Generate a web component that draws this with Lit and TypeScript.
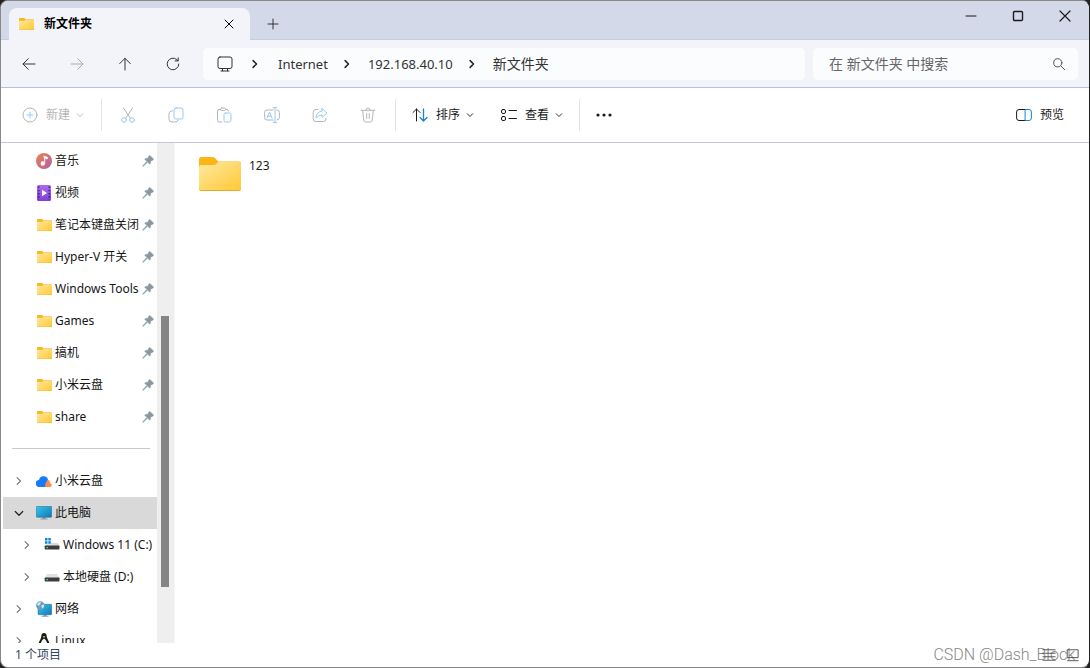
import { LitElement, html, svg, css, nothing } from "lit";
import { customElement, property, state } from "lit/decorators.js";
import { classMap } from "lit/directives/class-map.js";

const folder = (w: number, h: number) => html`
  <svg width=${w} height=${h} viewBox="0 0 42 34" preserveAspectRatio="none" aria-hidden="true">
    <defs>
      <linearGradient id="fold" x1="0" y1="0" x2="1" y2="1">
        <stop offset="0" stop-color="#ffe8a0" /><stop offset="1" stop-color="#ffc935" />
      </linearGradient>
    </defs>
    <path d="M0 2.5Q0 0 2.5 0H13q2 0 3.300 1.300L19 4.500H39.500Q42 4.500 42 7V20H0z" fill="#fbb616" />
    <path d="M0 10Q0 8 2 8H14q2 0 3.500-1.300L19 5H40q2 0 2 2V31.500Q42 34 39.500 34H2.500Q0 34 0 31.500z" fill="#e3ab2c" />
    <path d="M0 10Q0 8 2 8H14q2 0 3.500-1.300L19 5H40q2 0 2 2V30.500Q42 33 39.500 33H2.500Q0 33 0 30.500z" fill="url(#fold)" />
  </svg>`;

const stroke = (size: number, body: unknown) => html`
  <svg width=${size} height=${size} viewBox="0 0 16 16" fill="none" stroke="currentColor"
    stroke-linecap="round" stroke-linejoin="round" aria-hidden="true">${body}</svg>`;

const icons: Record<string, () => unknown> = {
  back: () => stroke(16, svg`<path d="M14 8H2M7.300 2.700L2 8l5.300 5.300" />`),
  forward: () => stroke(16, svg`<path d="M2 8h12M8.700 2.700L14 8l-5.300 5.300" />`),
  up: () => stroke(16, svg`<path d="M8 14V2.300M2.700 7.600L8 2.300l5.300 5.300" />`),
  refresh: () => stroke(16, svg`<path d="M13.800 8a5.800 5.800 0 1 1-2-4.400l1.200 1.100M13.200 1.800v3.100h-3.100" />`),
  device: () => stroke(16, svg`<rect x="1" y="1" width="14" height="11.500" rx="2" /><path d="M5.500 12.500v2.300M10.500 12.500v2.300M4 15h8" />`),
  search: () => stroke(16, svg`<circle cx="6.800" cy="6.800" r="4.100" /><path d="M10 10l3.700 3.700" />`),
  plus: () => stroke(16, svg`<path d="M8 3v10M3 8h10" />`),
  close: () => stroke(16, svg`<path d="M4 4l8 8M12 4l-8 8" />`),
  min: () => stroke(16, svg`<path d="M3 8h10" />`),
  max: () => stroke(16, svg`<rect x="3.500" y="3.500" width="9" height="9" rx="1" stroke-width="1.400" />`),
  shut: () => stroke(16, svg`<path d="M3 3l10 10M13 3L3 13" stroke-width="1.200" />`),
  add: () => stroke(16, svg`<circle cx="8" cy="8" r="7" /><path d="M8 5v6M5 8h6" stroke="#94cbf3" />`),
  cut: () => stroke(16, svg`<path d="M3.500 1l6.800 10.200M12.500 1L5.700 11.200" /><g stroke="#94cbf3"><circle cx="4" cy="13" r="2.400" /><circle cx="12" cy="13" r="2.400" /></g>`),
  copy: () => stroke(16, svg`<path d="M4.500 4H3.500Q1 4.500 1 7v5q0 3 3 3h3.500q2 0 2.500-2" /><rect x="6" y="1" width="9" height="11" rx="2" stroke="#94cbf3" />`),
  paste: () => stroke(16, svg`<path d="M4.500 2.500H3Q1.500 2.500 1.500 4v9.500Q1.500 15 3 15h3M9.500 2.500H11q1.500 0 1.500 1.500" /><rect x="4.500" y="1" width="5" height="2.500" rx="1.200" /><rect x="8" y="6" width="7" height="9" rx="1.500" stroke="#94cbf3" />`),
  rename: () => stroke(16, svg`<path d="M9 3H3Q.6 3 .6 5.400v5.200Q.6 13 3 13h6M13 3q2.400 0 2.400 2.400v5.200Q15.400 13 13 13" /><g stroke="#94cbf3"><path d="M3 11l2.500-6L8 11M3.800 9.200h3.400M11 .700v14.600M9.300.600h3.400M9.300 15.400h3.400" /></g>`),
  share: () => stroke(16, svg`<path d="M6 2.500H4Q1.200 2.500 1.200 5.300v6.400Q1.200 14.500 4 14.500h7.500q2.500 0 2.500-2.500v-.500" /><path d="M10 1.500L15 6l-5 4.500V8Q6 8 4 11q.300-6.300 6-7z" stroke="#94cbf3" />`),
  trash: () => stroke(16, svg`<path d="M1.200 3.300h13.600M5.800 3Q6 1 8 1t2.200 2M2.700 3.500l1 9.500q.3 2 2 2h4.600q1.700 0 2-2l1-9.500M6.700 6.500v5M9.300 6.500v5" />`),
  sort: () => stroke(16, svg`<path d="M4.500 14V2M1 5.500L4.500 2 8 5.500" /><path d="M11.500 2v12M8 10.500l3.500 3.500 3.500-3.500" stroke="#1683d8" stroke-width="1.300" />`),
  view: () => stroke(16, svg`<rect x=".500" y="2.500" width="4" height="4" rx="1.500" /><rect x=".500" y="9.500" width="4" height="4" rx="1.500" /><path d="M8 3.500h7.500M8 11.500h7.500" />`),
  more: () => html`<svg width="16" height="16" viewBox="0 0 16 16" fill="currentColor" aria-hidden="true"><circle cx="2" cy="8" r="1.600" /><circle cx="8" cy="8" r="1.600" /><circle cx="14" cy="8" r="1.600" /></svg>`,
  preview: () => stroke(16, svg`<path d="M9.500 2.500H3Q.6 2.500.6 5v6Q.6 13.500 3 13.500h6.500" /><path d="M9.500 2.500H13q2.400 0 2.400 2.500v6q0 2.500-2.400 2.500H9.500z" stroke="#1683d8" />`),
  right: () => stroke(12, svg`<path d="M5.500 3.500L10 8l-4.500 4.500" stroke-width="1.500" />`),
  crumb: () => stroke(12, svg`<path d="M5.500 3.500L10 8l-4.500 4.500" stroke-width="2" />`),
  down: () => stroke(12, svg`<path d="M3 6l5 5 5-5" stroke-width="1.600" />`),
  caret: () => stroke(8, svg`<path d="M2.500 5.500L8 11l5.500-5.500" stroke-width="1.800" />`),
  pin: () => html`<svg width="12" height="12" viewBox="0 0 12 12" aria-hidden="true"><path d="M7.200.800Q7.700.300 8.200.800l3 3q.500.500 0 1L8.700 6.200l-.5 2.500q-.2.600-.7.200L5.600 7 1 11.400l-.4-.3L4.900 6.400 3 4.500q-.4-.5.200-.7l2.500-.5z" fill="#8b98a3" stroke="#8b98a3" stroke-width=".6" /></svg>`,
  folder: () => folder(15, 12),
  music: () => html`<svg width="16" height="16" viewBox="0 0 16 16" aria-hidden="true"><defs><linearGradient id="mus" x1="0" y1="0" x2="1" y2="1"><stop stop-color="#ee8150" /><stop offset="1" stop-color="#ac61a5" /></linearGradient></defs><circle cx="8" cy="8" r="8" fill="url(#mus)" /><path d="M7.500 3l3.800 1v2L8.800 5.300v5.200" fill="#fff" stroke="#fff" stroke-width=".6" /><circle cx="6.800" cy="10.500" r="2.200" fill="#fff" /></svg>`,
  video: () => html`<svg width="14" height="16" viewBox="0 0 14 16" aria-hidden="true"><defs><linearGradient id="vid" x1="0" y1="0" x2="0" y2="1"><stop stop-color="#ad6cf0" /><stop offset="1" stop-color="#7f3fd7" /></linearGradient></defs><rect width="14" height="16" rx="1.500" fill="url(#vid)" /><path d="M1.700 1.500v13M12.300 1.500v13" stroke="#45208a" stroke-width="1.600" stroke-dasharray="1.600 1.600" /><path d="M5 4.800L10 8l-5 3.200z" fill="#fff" /></svg>`,
  cloud: () => html`<svg width="16" height="12" viewBox="0 0 16 12" aria-hidden="true"><path d="M3.500 12A3.500 3.500 0 0 1 3 5 4.700 4.700 0 0 1 12 4.300L10 12z" fill="#147bff" /><path d="M9 12Q9 6 13 4.800 14 9 16 10q-.5 2-2.500 2z" fill="#ff8a4b" /></svg>`,
  pc: () => html`<svg width="16" height="14" viewBox="0 0 16 14" aria-hidden="true"><defs><linearGradient id="scr" x1="0" y1="0" x2="1" y2="1"><stop stop-color="#35c7e9" /><stop offset="1" stop-color="#1177ba" /></linearGradient></defs><path d="M6.500 11h3v2h-3zM4.500 12.600h7v1h-7z" fill="#8d9aa4" /><rect x=".3" y=".3" width="15.400" height="11" rx=".8" fill="url(#scr)" stroke="#24688d" stroke-width=".5" /></svg>`,
  winDrive: () => html`<svg width="16" height="14" viewBox="0 0 16 14" aria-hidden="true"><path d="M1 0h2.500v2.500H1zM4.300 0h2.500v2.500H4.300zM1 3.300h2.500v2.500H1zM4.300 3.300h2.500v2.500H4.300z" fill="#0b83d9" /><path d="M7 5h7l1.500 3H1L2 6.300h5z" fill="#d8dadc" /><rect x=".7" y="7.500" width="14.800" height="4" rx=".7" fill="#3a3d40" /><rect x="2.300" y="9" width="1.700" height="1.200" fill="#41e04d" /></svg>`,
  drive: () => html`<svg width="16" height="14" viewBox="0 0 16 14" aria-hidden="true"><path d="M3 4h10l2.500 4H.7z" fill="#dfe1e3" /><rect x=".7" y="7.500" width="14.800" height="4" rx=".7" fill="#3a3d40" /><rect x="2.300" y="9" width="1.700" height="1.200" fill="#41e04d" /></svg>`,
  network: () => html`<svg width="16" height="16" viewBox="0 0 16 16" aria-hidden="true"><defs><linearGradient id="net" x1="0" y1="0" x2="1" y2="1"><stop stop-color="#3ac8ea" /><stop offset="1" stop-color="#1177ba" /></linearGradient></defs><path d="M7.500 13.500h3v1.700h-3zM5.500 14.800h7v1h-7z" fill="#8d9aa4" /><rect x="2" y="3.300" width="13.700" height="10.400" rx=".8" fill="url(#net)" stroke="#24688d" stroke-width=".5" /><circle cx="4.300" cy="4.500" r="4.200" fill="#6d9fbd" /><path d="M1 3q2-2.500 4-2l-1 2.500L2.500 5zM5 4.500l3-1q.5 2-1.500 4z" fill="#d4eaf4" /></svg>`,
  linux: () => html`<svg width="16" height="16" viewBox="0 0 16 16" aria-hidden="true"><path d="M8 0q2.700 0 2.700 3.500Q11 5 12.500 8q1.500 3 .5 5H3Q2 11 3.500 8 5 5.500 5.300 3.500 5.300 0 8 0z" fill="#17191b" /><path d="M8 5.500q2 .8 3 4V14H5V9.500q1-3.200 3-4z" fill="#f4f4f4" /><path d="M6.500 3.500L8 3l1.500.5L8 5z" fill="#f3b51c" /><path d="M2.500 11l3 3-.5 1.500-4-1zM13.500 11l-3 3 .5 1.500 4-1z" fill="#f3b51c" /></svg>`,
};

@customElement("nav-item")
class NavItem extends LitElement {
  @property() label = "";
  @property() icon = "folder";
  @property() arrow = "";
  @property({ type: Boolean }) pinned = false;
  @property({ type: Boolean }) selected = false;
  @property({ type: Boolean }) nested = false;

  static styles = css`
    :host { display: block; }
    .row {
      display: grid; grid-template-columns: 12px 16px minmax(0, 1fr) 12px;
      align-items: center; width: 100%; height: 32px;
      padding: 0 3px 0 10px; border: 0; background: none; color: #161616;
      font: inherit; text-align: left;
    }
    .selected { background: #d9d9d9; }
    .nested { padding-left: 18px; }
    .arrow { display: grid; place-items: center; color: #777; }
    .selected .arrow { color: #222; }
    .pic { display: grid; place-items: center; width: 16px; margin-left: 11px; }
    .text { margin-left: 14px; white-space: nowrap; }
    .pin { display: grid; }
    svg { display: block; }
  `;

  render() {
    return html`
      <button class=${classMap({ row: true, selected: this.selected, nested: this.nested })}>
        <span class="arrow">${this.arrow ? icons[this.arrow]() : nothing}</span>
        <span class="pic">${icons[this.icon]()}</span>
        <span class="text">${this.label}</span>
        <span class="pin">${this.pinned ? icons.pin() : nothing}</span>
      </button>`;
  }
}

interface Entry { label: string; icon?: string; arrow?: string; selected?: boolean; nested?: boolean; }

@customElement("app-root")
class AppRoot extends LitElement {
  @state() private quick: Entry[] = [
    { label: "音乐", icon: "music" },
    { label: "视频", icon: "video" },
    { label: "笔记本键盘关闭" },
    { label: "Hyper-V 开关" },
    { label: "Windows Tools" },
    { label: "Games" },
    { label: "搞机" },
    { label: "小米云盘" },
    { label: "share" },
  ];
  @state() private tree: Entry[] = [
    { label: "小米云盘", icon: "cloud", arrow: "right" },
    { label: "此电脑", icon: "pc", arrow: "down", selected: true },
    { label: "Windows 11 (C:)", icon: "winDrive", arrow: "right", nested: true },
    { label: "本地硬盘 (D:)", icon: "drive", arrow: "right", nested: true },
    { label: "网络", icon: "network", arrow: "right" },
    { label: "Linux", icon: "linux", arrow: "right" },
  ];

  static styles = css`
    :host { display: block; height: 100vh; background: #222; }
    * { box-sizing: border-box; }
    svg { display: block; flex: none; }
    button { display: flex; align-items: center; justify-content: center; padding: 0; border: 0; background: none; color: inherit; font: inherit; }
    .window {
      display: grid; grid-template-rows: 39px 48px 55px minmax(0, 1fr) 24px;
      height: 100%; overflow: hidden; color: #1b1b1b; background: #fff;
      border: 1px solid #88888b; border-top-color: #8c8885; border-right-color: #222; border-radius: 8px;
      font: 12px/16px "Noto Sans", "Noto Sans CJK SC", sans-serif;
    }
    .titlebar { display: flex; background: #d4d9ea; padding: 7px 0 0 8px; box-shadow: inset 0 -1px #c5cde0; }
    .tab {
      display: flex; align-items: center; width: 241px; padding: 0 13px 0 10px;
      background: #f2f4fa; border-radius: 8px 8px 0 0; font-weight: 700; color: #000;
    }
    .tab-title { flex: 1; margin-left: 10px; }
    .new-tab { width: 46px; color: #333; }
    .controls { display: flex; margin: -7px 1px 0 auto; }
    .controls button { width: 47px; height: 29px; }
    .address { display: flex; align-items: center; gap: 8px; padding: 0 11px 0 4px; background: #f2f4fa; border-bottom: 1px solid #b7bfdb; }
    .nav { display: flex; }
    .nav button { width: 48px; height: 32px; color: #333; }
    .nav button:disabled { color: #aaa; }
    .path, .search { display: flex; align-items: center; height: 32px; background: #fbfcfe; border-radius: 5px; font-size: 14px; }
    .path { flex: 1; padding-left: 14px; margin-left: -2px; color: #333; }
    .path ol { display: flex; align-items: center; margin: 0; padding: 0; list-style: none; }
    .path li { display: flex; align-items: center; }
    .sep { display: grid; place-items: center; width: 12px; margin: 0 15px 0 13px; color: #222; }
    .path li:first-child .sep { margin: 0 17px 0 16px; }
    .latin { font-size: 13px; }
    .path a { color: inherit; text-decoration: none; }
    .search { width: 265px; padding: 0 11px 0 16px; color: #555; }
    .search input { flex: 1; min-width: 0; padding: 0; border: 0; outline: 0; background: none; color: inherit; font: inherit; }
    .search input::placeholder { color: #666; opacity: 1; }
    .toolbar { display: flex; align-items: center; padding: 0 25px 0 21px; border-bottom: 1px solid #c3c6de; }
    .toolbar button { gap: 6px; }
    .toolbar button span { margin-left: 2px; }
    .toolbar button:disabled { color: #b5b5b5; }
    .tools { display: flex; gap: 32px; margin: 0 19px 0 18px; }
    .rule { width: 1px; height: 32px; background: #e4e4e4; }
    .new { margin-right: 17px; }
    .sort { margin: 0 27px 0 16px; }
    .view { margin-right: 16px; }
    .more { margin-left: 16px; }
    .preview { margin-left: auto; }
    .body { display: grid; grid-template-columns: 156px 17px minmax(0, 1fr); min-height: 0; }
    .side { overflow: hidden; padding: 2px 0 0 2px; }
    .divider { height: 1px; margin: 15px 7px 16px 9px; border: 0; background: #c8c8c8; }
    .track { display: flex; flex-direction: column; background: #efefef; padding: 0 5px 0 4px; }
    .track .before { flex: 173; }
    .track .thumb { flex: 271; background: #858585; }
    .track .after { flex: 56; }
    .files { border-left: 1px solid #f7f7f7; padding: 14px 24px; }
    .file { gap: 8px; align-items: flex-start; }
    .file-name { line-height: 18px; }
    .status { display: flex; align-items: center; padding: 0 10px 0 14px; color: #34445f; }
    .watermark { margin-left: auto; color: #888; font: 300 16px/20px Roboto, sans-serif; }
    .modes { display: flex; gap: 9px; margin-left: -33px; color: #444; }
  `;

  render() {
    const sep = html`<span class="sep">${icons.crumb()}</span>`;
    return html`
      <div class="window">
        <header class="titlebar">
          <div class="tab">
            ${folder(15, 12)}
            <span class="tab-title">新文件夹</span>
            <button aria-label="关闭标签页">${icons.close()}</button>
          </div>
          <button class="new-tab" aria-label="新建标签页">${icons.plus()}</button>
          <div class="controls">
            <button aria-label="最小化">${icons.min()}</button>
            <button aria-label="最大化">${icons.max()}</button>
            <button aria-label="关闭">${icons.shut()}</button>
          </div>
        </header>
        <div class="address">
          <div class="nav">
            <button aria-label="后退">${icons.back()}</button>
            <button aria-label="前进" disabled>${icons.forward()}</button>
            <button aria-label="向上">${icons.up()}</button>
            <button aria-label="刷新">${icons.refresh()}</button>
          </div>
          <nav class="path" aria-label="路径">
            ${icons.device()}
            <ol>
              <li>${sep}<a class="latin" href="#internet">Internet</a></li>
              <li>${sep}<a class="latin" href="#host">192.168.40.10</a></li>
              <li>${sep}<a href="#folder">新文件夹</a></li>
            </ol>
          </nav>
          <label class="search">
            <input type="search" aria-label="搜索" placeholder="在 新文件夹 中搜索" />
            ${icons.search()}
          </label>
        </div>
        <div class="toolbar">
          <button class="new" disabled>${icons.add()}<span>新建</span>${icons.caret()}</button>
          <div class="rule"></div>
          <div class="tools">
            <button aria-label="剪切" disabled>${icons.cut()}</button>
            <button aria-label="复制" disabled>${icons.copy()}</button>
            <button aria-label="粘贴" disabled>${icons.paste()}</button>
            <button aria-label="重命名" disabled>${icons.rename()}</button>
            <button aria-label="共享" disabled>${icons.share()}</button>
            <button aria-label="删除" disabled>${icons.trash()}</button>
          </div>
          <div class="rule"></div>
          <button class="sort">${icons.sort()}<span>排序</span>${icons.caret()}</button>
          <button class="view">${icons.view()}<span>查看</span>${icons.caret()}</button>
          <div class="rule"></div>
          <button class="more" aria-label="更多">${icons.more()}</button>
          <button class="preview">${icons.preview()}<span>预览</span></button>
        </div>
        <div class="body">
          <nav class="side" aria-label="导航窗格">
            ${this.quick.map((e) => html`<nav-item label=${e.label} icon=${e.icon ?? "folder"} pinned></nav-item>`)}
            <hr class="divider" />
            ${this.tree.map((e) => html`<nav-item label=${e.label} icon=${e.icon ?? "folder"} arrow=${e.arrow ?? ""}
              ?selected=${e.selected} ?nested=${e.nested}></nav-item>`)}
          </nav>
          <div class="track"><span class="before"></span><span class="thumb"></span><span class="after"></span></div>
          <main class="files">
            <button class="file">${folder(42, 34)}<span class="file-name">123</span></button>
          </main>
        </div>
        <footer class="status">
          <span>1 个项目</span>
          <span class="watermark">CSDN @Dash_Block</span>
          <span class="modes">
            ${stroke(14, svg`<path d="M1 2h14M1 6h14M1 10h14M1 14h14" />`)}
            ${stroke(14, svg`<rect x="3" y="2" width="12" height="9" /><path d="M3 14.500h12" />`)}
          </span>
        </footer>
      </div>`;
  }
}
